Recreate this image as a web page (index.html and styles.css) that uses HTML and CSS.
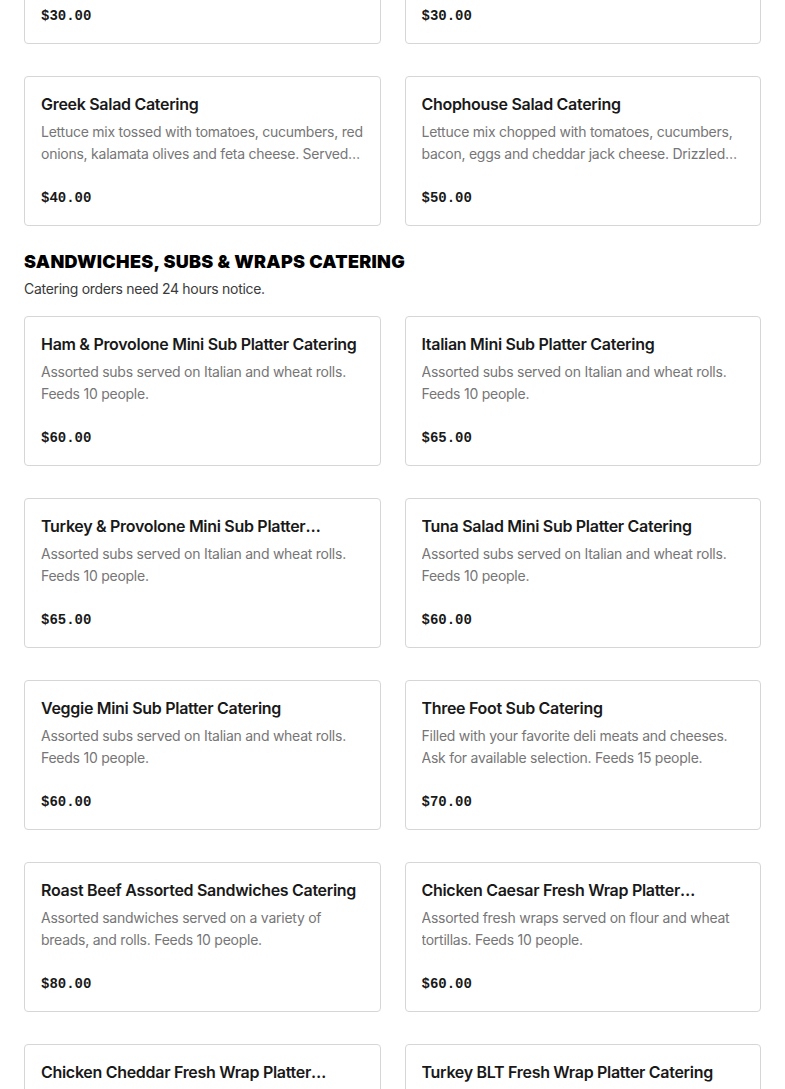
FILE: index.html
```html
<!DOCTYPE html>
<html lang="en">
<head>
<meta charset="utf-8">
<title>Catering Menu</title>
<link rel="stylesheet" href="styles.css">
</head>
<body>
<main class="menu">
  <div class="grid">
    <article class="card">
      <h3 class="card-title">Garden Salad Catering</h3>
      <p class="card-desc">Lettuce mix tossed with tomatoes, cucumbers, carrots and croutons. Served with your choice of dressing.</p>
      <p class="card-price">$30.00</p>
    </article>
    <article class="card">
      <h3 class="card-title">Caesar Salad Catering</h3>
      <p class="card-desc">Romaine lettuce tossed with parmesan cheese and croutons. Served with Caesar dressing.</p>
      <p class="card-price">$30.00</p>
    </article>
    <article class="card">
      <h3 class="card-title">Greek Salad Catering</h3>
      <p class="card-desc">Lettuce mix tossed with tomatoes, cucumbers, red onions, kalamata olives and feta cheese. Served with Greek dressing.</p>
      <p class="card-price">$40.00</p>
    </article>
    <article class="card">
      <h3 class="card-title">Chophouse Salad Catering</h3>
      <p class="card-desc">Lettuce mix chopped with tomatoes, cucumbers, bacon, eggs and cheddar jack cheese. Drizzled with ranch dressing.</p>
      <p class="card-price">$50.00</p>
    </article>
  </div>

  <section class="section">
    <h2 class="section-title">Sandwiches, Subs &amp; Wraps Catering</h2>
    <p class="section-note">Catering orders need 24 hours notice.</p>
    <div class="grid">
      <article class="card">
        <h3 class="card-title">Ham &amp; Provolone Mini Sub Platter Catering</h3>
        <p class="card-desc">Assorted subs served on Italian and wheat rolls. Feeds 10 people.</p>
        <p class="card-price">$60.00</p>
      </article>
      <article class="card">
        <h3 class="card-title">Italian Mini Sub Platter Catering</h3>
        <p class="card-desc">Assorted subs served on Italian and wheat rolls. Feeds 10 people.</p>
        <p class="card-price">$65.00</p>
      </article>
      <article class="card">
        <h3 class="card-title">Turkey &amp; Provolone Mini Sub Platter Catering</h3>
        <p class="card-desc">Assorted subs served on Italian and wheat rolls. Feeds 10 people.</p>
        <p class="card-price">$65.00</p>
      </article>
      <article class="card">
        <h3 class="card-title">Tuna Salad Mini Sub Platter Catering</h3>
        <p class="card-desc">Assorted subs served on Italian and wheat rolls. Feeds 10 people.</p>
        <p class="card-price">$60.00</p>
      </article>
      <article class="card">
        <h3 class="card-title">Veggie Mini Sub Platter Catering</h3>
        <p class="card-desc">Assorted subs served on Italian and wheat rolls. Feeds 10 people.</p>
        <p class="card-price">$60.00</p>
      </article>
      <article class="card">
        <h3 class="card-title">Three Foot Sub Catering</h3>
        <p class="card-desc">Filled with your favorite deli meats and cheeses. Ask for available selection. Feeds 15 people.</p>
        <p class="card-price">$70.00</p>
      </article>
      <article class="card">
        <h3 class="card-title">Roast Beef Assorted Sandwiches Catering</h3>
        <p class="card-desc">Assorted sandwiches served on a variety of breads, and rolls. Feeds 10 people.</p>
        <p class="card-price">$80.00</p>
      </article>
      <article class="card">
        <h3 class="card-title">Chicken Caesar Fresh Wrap Platter Catering</h3>
        <p class="card-desc">Assorted fresh wraps served on flour and wheat tortillas. Feeds 10 people.</p>
        <p class="card-price">$60.00</p>
      </article>
      <article class="card">
        <h3 class="card-title">Chicken Cheddar Fresh Wrap Platter Catering</h3>
        <p class="card-desc">Assorted fresh wraps served on flour and wheat tortillas. Feeds 10 people.</p>
        <p class="card-price">$60.00</p>
      </article>
      <article class="card">
        <h3 class="card-title">Turkey BLT Fresh Wrap Platter Catering</h3>
        <p class="card-desc">Assorted fresh wraps served on flour and wheat tortillas. Feeds 10 people.</p>
        <p class="card-price">$60.00</p>
      </article>
    </div>
  </section>
</main>
</body>
</html>
```

FILE: styles.css
```css
* { box-sizing: border-box; }

html, body {
  margin: 0;
  padding: 0;
  background: #ffffff;
}

body {
  font-family: "Inter", "Liberation Sans", sans-serif;
  color: #191919;
  overflow: hidden;
  height: 1089px;
}

.menu {
  margin-top: -106px;
  padding: 0 24px;
}

.grid {
  display: grid;
  grid-template-columns: minmax(0, 1fr) minmax(0, 1fr);
  column-gap: 24px;
  row-gap: 32px;
}

.card {
  border: 1px solid #d6d6d6;
  border-radius: 4px;
  padding: 16px 16px 16px;
  height: 150px;
  min-width: 0;
  display: flex;
  flex-direction: column;
  background: #fff;
}

.card-title {
  margin: 0;
  font-size: 16px;
  line-height: 22px;
  height: 22px;
  font-weight: 600;
  letter-spacing: -0.3px;
  color: #191919;
  display: -webkit-box;
  -webkit-line-clamp: 1;
  -webkit-box-orient: vertical;
  overflow: hidden;
  flex-shrink: 0;
}

.card-desc {
  margin: 6px 0 0;
  font-size: 14px;
  line-height: 22px;
  letter-spacing: -0.25px;
  color: #767676;
  height: 44px;
  display: -webkit-box;
  -webkit-line-clamp: 2;
  -webkit-box-orient: vertical;
  overflow: hidden;
  flex-shrink: 0;
}

.card-price {
  margin: 22px 0 0;
  font-family: "Liberation Mono", "DejaVu Sans Mono", monospace;
  font-weight: 700;
  font-size: 14px;
  line-height: 22px;
  color: #191919;
}

.section {
  margin-top: 25px;
}

.section-title {
  margin: 0;
  font-family: "Inter", "Liberation Sans", sans-serif;
  font-weight: 900;
  font-size: 18px;
  line-height: 22px;
  letter-spacing: 0.3px;
  text-transform: uppercase;
  color: #000;
}

.section-note {
  margin: 5px 0 16px;
  font-size: 14px;
  line-height: 22px;
  letter-spacing: -0.3px;
  color: #3a3a3a;
}
```
